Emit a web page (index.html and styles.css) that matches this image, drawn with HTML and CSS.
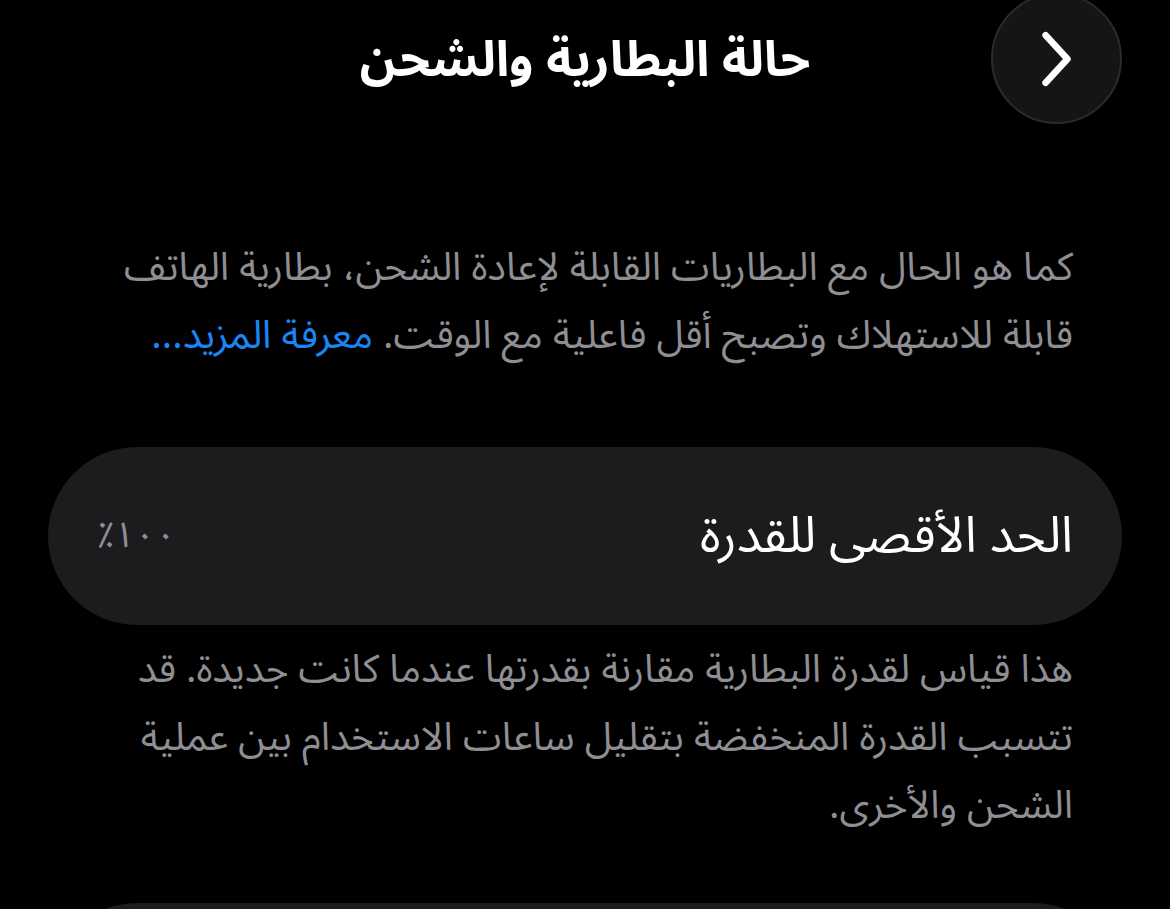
FILE: index.html
```
<!DOCTYPE html>
<html lang="ar" dir="rtl">
<head>
<meta charset="utf-8">
<link rel="stylesheet" href="styles.css">
</head>
<body>
<div class="screen">
  <header class="nav">
    <button class="back" aria-label="رجوع">
      <svg viewBox="0 0 40 62" width="38" height="60"><path d="M8 6 L31 31 L8 56" fill="none" stroke="#fff" stroke-width="7" stroke-linecap="round" stroke-linejoin="round"/></svg>
    </button>
    <h1 class="title">حالة البطارية والشحن</h1>
  </header>
  <p class="intro">كما هو الحال مع البطاريات القابلة لإعادة الشحن، بطارية الهاتف قابلة للاستهلاك وتصبح أقل فاعلية مع الوقت. <a class="link">معرفة المزيد...</a></p>
  <div class="card">
    <span class="label">الحد الأقصى للقدرة</span>
    <span class="value">١٠٠٪</span>
  </div>
  <p class="foot">هذا قياس لقدرة البطارية مقارنة بقدرتها عندما كانت جديدة. قد تتسبب القدرة المنخفضة بتقليل ساعات الاستخدام بين عملية الشحن والأخرى.</p>
  <div class="card next"></div>
</div>
</body>
</html>
```
FILE: styles.css
```
html, body {
  margin: 0;
  padding: 0;
  background: #000;
}
body {
  font-family: "Noto Sans Arabic", "DejaVu Sans", "Noto Sans", sans-serif;
  color: #fff;
  overflow: hidden;
}
.screen {
  width: 1170px;
  height: 909px;
  padding: 0 48px;
  box-sizing: border-box;
  display: flex;
  flex-direction: column;
  overflow: hidden;
}
.screen > * {
  flex-shrink: 0;
}
.nav {
  position: relative;
  height: 120px;
  display: flex;
  align-items: center;
  justify-content: center;
}
.back {
  position: absolute;
  right: 0;
  top: -7px;
  width: 131px;
  height: 131px;
  border-radius: 50%;
  background: #151515;
  border: 2px solid #2b2b2b;
  box-sizing: border-box;
  display: flex;
  align-items: center;
  justify-content: center;
  padding: 0;
}
.title {
  margin: 0;
  font-size: 49px;
  font-weight: 700;
  line-height: 1;
}
.intro, .foot {
  margin: 0;
  padding: 0 49px;
  font-size: 39px;
  line-height: 68px;
  color: #8e8e93;
}
.intro {
  margin-top: 114px;
}
.link {
  color: #1a86f5;
}
.card {
  margin-top: 77px;
  height: 178px;
  border-radius: 89px;
  background: #1c1c1e;
  padding: 0 49px;
  display: flex;
  align-items: center;
  justify-content: space-between;
}
.label {
  font-size: 50px;
}
.value {
  font-size: 36px;
  color: #8e8e93;
}
.foot {
  margin-top: 11px;
}
.card.next {
  margin-top: 63px;
}
```
